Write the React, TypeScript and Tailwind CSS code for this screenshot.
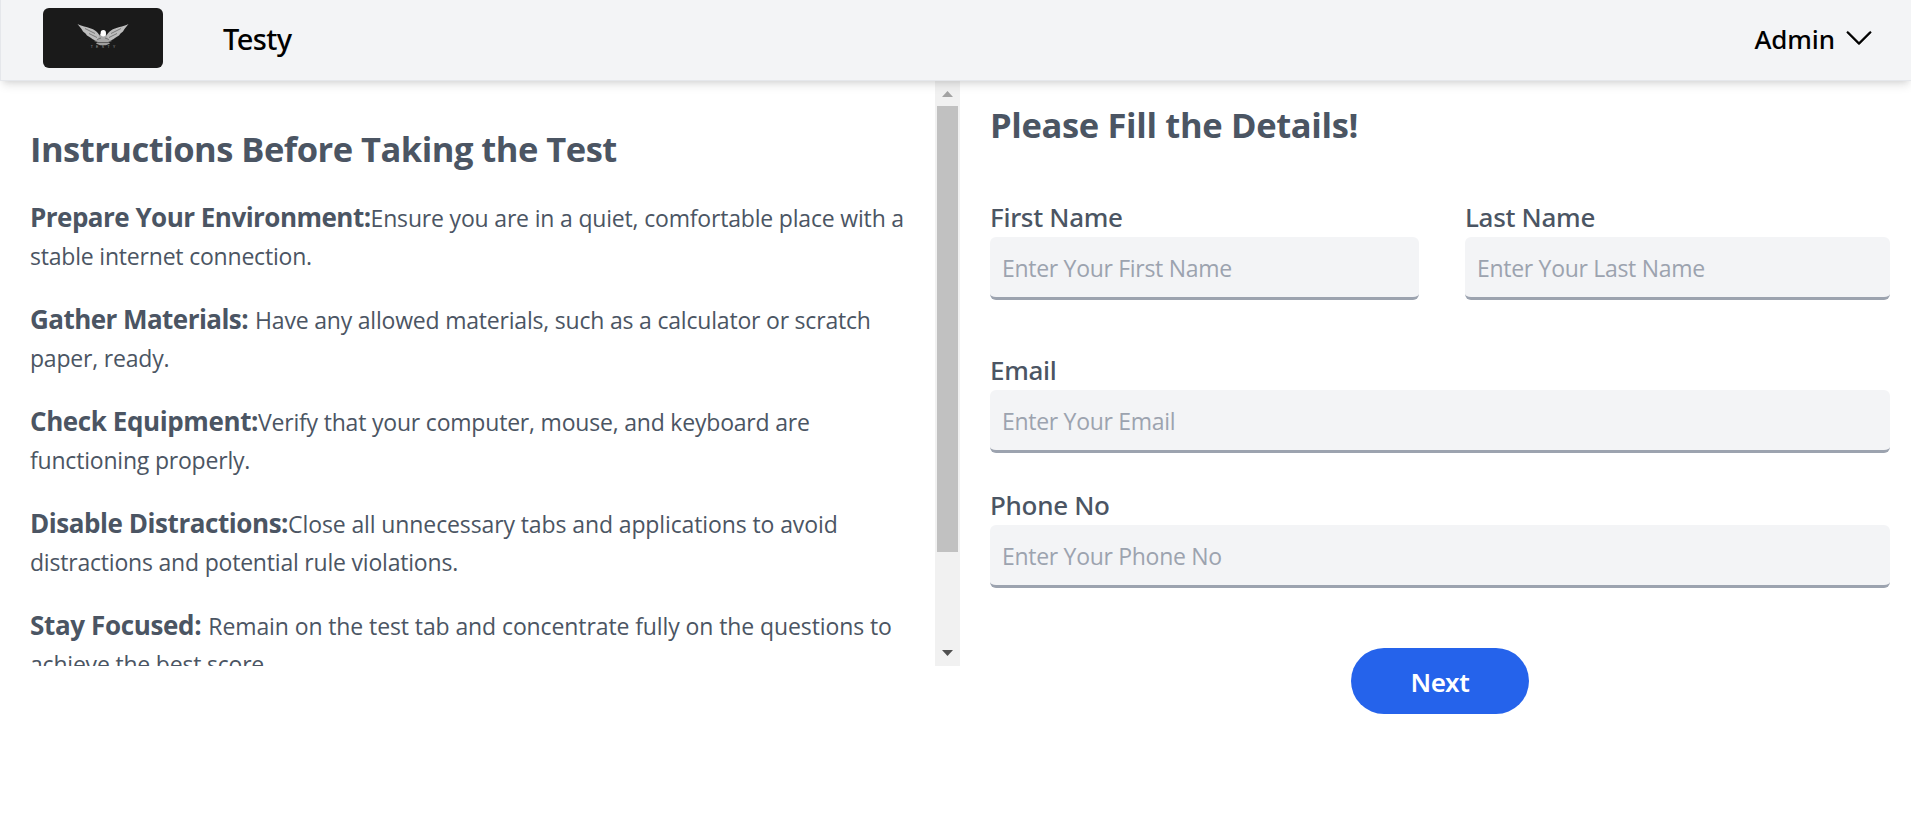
import { BsChevronDown } from "react-icons/bs";

type Instruction = {
  title: string;
  titleClass: string;
  first: string;
  firstClass: string;
  second: string;
};

const instructions: Instruction[] = [
  {
    title: "Prepare Your Environment:",
    titleClass: "tracking-[-0.52px]",
    first: "Ensure you are in a quiet, comfortable place with a",
    firstClass: "tracking-[-0.18px]",
    second: "stable internet connection.",
  },
  {
    title: "Gather Materials:",
    titleClass: "tracking-[-0.55px] mr-[7px]",
    first: "Have any allowed materials, such as a calculator or scratch",
    firstClass: "tracking-[-0.2px]",
    second: "paper, ready.",
  },
  {
    title: "Check Equipment:",
    titleClass: "tracking-[-0.4px]",
    first: "Verify that your computer, mouse, and keyboard are",
    firstClass: "tracking-[-0.2px]",
    second: "functioning properly.",
  },
  {
    title: "Disable Distractions:",
    titleClass: "tracking-[-0.44px]",
    first: "Close all unnecessary tabs and applications to avoid",
    firstClass: "tracking-[-0.11px]",
    second: "distractions and potential rule violations.",
  },
  {
    title: "Stay Focused:",
    titleClass: "tracking-[-0.35px] mr-[7px]",
    first: "Remain on the test tab and concentrate fully on the questions to",
    firstClass: "tracking-[-0.1px]",
    second: "achieve the best score.",
  },
];

function Logo() {
  return (
    <svg viewBox="0 0 120 60" className="h-[60px] w-[120px] rounded-md bg-[#1a1a1a]" aria-label="Testy logo">
      <g fill="#bdbdbd">
        <path d="M34.5 16 C40 19 47 19 52 22.5 C55 24.5 56 27 58 29.5 L57 33 C53 33 50 32 48 30 L46.5 29 L44 27.5 L42.5 25.5 L40 23.5 L38.5 21 Z" />
        <path d="M85.5 16 C80 19 73 19 68 22.5 C65 24.5 64 27 62 29.5 L63 33 C67 33 70 32 72 30 L73.5 29 L76 27.5 L77.5 25.5 L80 23.5 L81.5 21 Z" />
        <path d="M57 26 L63 26 L65 31 L69 33 L65 34 L55 34 L51 33 L55 31 Z" fill="#a8a8a8" />
        <path d="M54 34.4 L66 34.4 L67 35.6 L63 37.2 L57 37.2 L53 35.6 Z" fill="#a0a0a0" />
      </g>
      <ellipse cx="60.3" cy="25.2" rx="2.7" ry="3.3" fill="#fff" />
      <g stroke="#4d4d4d" strokeWidth="0.6" fill="none">
        <path d="M42 20.5 L52 25.5 M46 25.5 L54 29.5 M78 20.5 L68 25.5 M74 25.5 L66 29.5 M54 31.5 L58 30 M66 31.5 L62 30" />
      </g>
      <text x="61.6" y="40.4" textAnchor="middle" fontSize="3.4" letterSpacing="3.4" fill="#a0a0a0" fontFamily="Liberation Sans, sans-serif">
        TESTY
      </text>
    </svg>
  );
}

function Field({ label, placeholder }: { label: string; placeholder: string }) {
  return (
    <label className="block">
      <span className="block h-9 font-['Noto_Sans',sans-serif] text-[26px] leading-8 font-medium tracking-[-0.3px] text-[#4b5563]">
        {label}
      </span>
      <input
        placeholder={placeholder}
        className="block h-[63px] w-full rounded-md border-b-3 border-[#9ca3af] bg-[#f3f4f6] px-3 pt-0.5 text-[23px] tracking-[-0.3px] outline-none placeholder:text-[#9ca3af]"
      />
    </label>
  );
}

function ScrollBar() {
  return (
    <div className="flex w-[25px] shrink-0 flex-col items-center bg-[#f1f1f1]">
      <div className="flex h-[25px] items-center">
        <svg width="11" height="6" viewBox="0 0 11 6" fill="#a3a3a3">
          <path d="M0 6 L5.5 0 L11 6 Z" />
        </svg>
      </div>
      <div className="h-[446px] w-[21px] bg-[#c1c1c1]" />
      <div className="mt-auto h-[25px] pt-[9px]">
        <svg width="11" height="6" viewBox="0 0 11 6" fill="#505050">
          <path d="M0 0 L5.5 6 L11 0 Z" />
        </svg>
      </div>
    </div>
  );
}

export default function App() {
  return (
    <div className="h-[813px] overflow-hidden bg-white font-['Open_Sans',sans-serif]">
      <nav className="relative z-10 flex h-[81px] items-start border-b border-l border-[#e5e7eb] bg-[#f3f4f6] pr-[37px] pl-[42px] font-['Noto_Sans',sans-serif] font-medium text-black shadow-[0_6px_9px_-1.5px_rgba(0,0,0,0.1),0_3px_6px_-3px_rgba(0,0,0,0.1)]">
        <div className="pt-2">
          <Logo />
        </div>
        <span className="ml-[60px] h-20 text-[29px] leading-[78px] tracking-[-0.6px]">Testy</span>
        <button className="ml-auto flex h-[78px] items-center gap-[9px] text-[26px] tracking-[-0.1px]">
          Admin
          <BsChevronDown size={30} strokeWidth={0.3} className="relative -top-px" />
        </button>
      </nav>

      <main className="flex">
        <section className="flex h-[585px] w-[960px] overflow-hidden">
          <div className="grow pt-[41px] pl-[30px] whitespace-nowrap text-[#4b5563]">
            <h1 className="h-[54px] text-[34.5px] leading-[54px] font-bold tracking-[-0.51px]">
              Instructions Before Taking the Test
            </h1>
            <div className="mt-[22px] flex flex-col gap-6">
              {instructions.map((item) => (
                <p key={item.title} className="text-[23px] leading-[39px] tracking-[-0.2px]">
                  <span className="block h-[39px]">
                    <b className={`text-[26px] font-bold ${item.titleClass}`}>{item.title}</b>
                    <span className={item.firstClass}>{item.first}</span>
                  </span>
                  <span className="block h-[39px]">{item.second}</span>
                </p>
              ))}
            </div>
          </div>
          <ScrollBar />
        </section>

        <section className="flex grow flex-col pt-[17px] pr-[21px] pl-[30px]">
          <h2 className="h-[54px] text-[34.5px] leading-[54px] font-bold tracking-[-0.34px] text-[#4b5563]">
            Please Fill the Details!
          </h2>
          <div className="mt-[49px] grid grid-cols-[429px_425px] gap-[46px]">
            <Field label="First Name" placeholder="Enter Your First Name" />
            <Field label="Last Name" placeholder="Enter Your Last Name" />
          </div>
          <div className="mt-[54px] flex flex-col gap-9">
            <Field label="Email" placeholder="Enter Your Email" />
            <Field label="Phone No" placeholder="Enter Your Phone No" />
          </div>
          <button className="mt-[60px] h-[66px] w-[178px] self-center rounded-full bg-[#2563eb] pt-0.5 font-['Noto_Sans',sans-serif] text-[26px] font-semibold tracking-[-0.4px] text-white">
            Next
          </button>
        </section>
      </main>
    </div>
  );
}
